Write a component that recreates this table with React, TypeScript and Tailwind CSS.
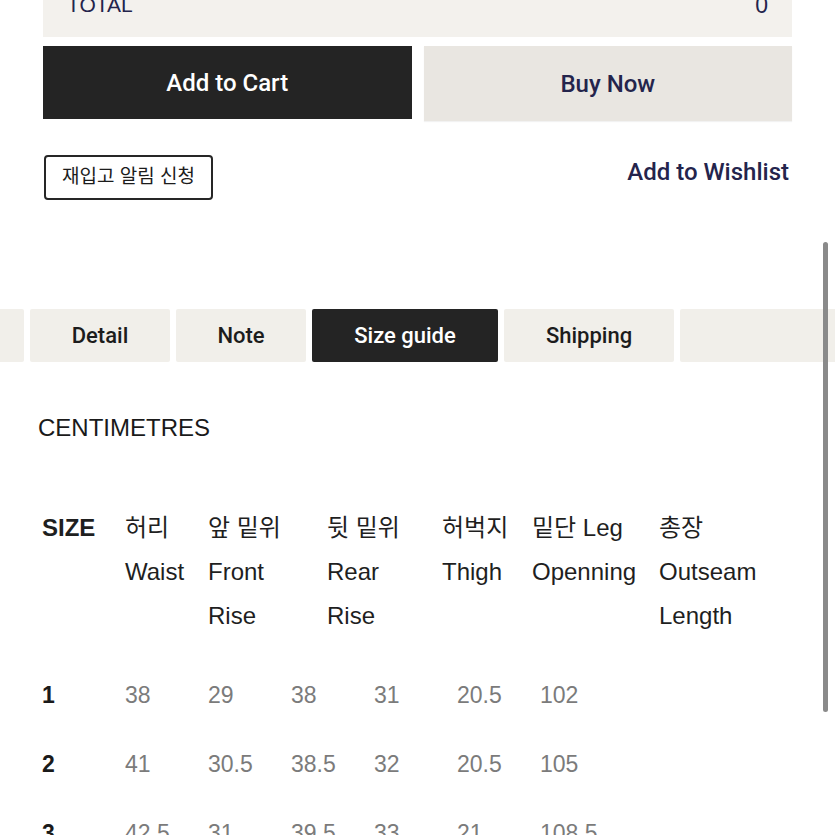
import React from "react";

const FONT = { fontFamily: '"Liberation Sans", "Noto Sans CJK KR", Arial, sans-serif' };
const MEDIUM = { fontFamily: 'Roboto, "Noto Sans CJK KR", Arial, sans-serif' };

const header: { cols: string[] }[] = [
  { cols: ["허리", "Waist"] },
  { cols: ["앞 밑위", "Front", "Rise"] },
  { cols: ["뒷 밑위", "Rear", "Rise"] },
  { cols: ["허벅지", "Thigh"] },
  { cols: ["밑단 Leg", "Openning"] },
  { cols: ["총장", "Outseam", "Length"] },
];

const rows = [
  ["1", "38", "29", "38", "31", "20.5", "102"],
  ["2", "41", "30.5", "38.5", "32", "20.5", "105"],
  ["3", "42.5", "31", "39.5", "33", "21", "108.5"],
];

const tabs: [string, string, boolean][] = [
  ["Detail", "w-[140px]", false],
  ["Note", "w-[130px]", false],
  ["Size guide", "w-[186px]", true],
  ["Shipping", "w-[170px]", false],
];

export default function App() {
  return (
    <div className="relative h-[835px] w-[835px] overflow-hidden bg-white" style={FONT}>
      {/* total panel, scrolled off the top */}
      <div className="mx-[43px] flex h-[37px] items-end justify-between overflow-hidden bg-[#f3f1ed] px-[24px] pb-[20px] text-[21px] leading-[24px] text-[#24244c]">
        <span>TOTAL</span>
        <span className="text-[23px]">0</span>
      </div>

      <div className="mx-[43px] mt-[9px] flex gap-[12px]" style={MEDIUM}>
        <button className="h-[73px] flex-1 bg-[#242424] text-[24px] font-medium text-white">
          Add to Cart
        </button>
        <button className="h-[75px] flex-1 bg-[#e9e6e1] text-[24px] font-medium text-[#24244c] shadow-[0_1px_1px_rgba(0,0,0,0.05)]">
          Buy Now
        </button>
      </div>

      <div className="mx-[43px] mt-[34px] flex items-start justify-between">
        <button className="ml-[1px] h-[45px] w-[169px] rounded-[4px] border-2 border-[#262626] text-[19px] text-[#1c1c1c]">
          재입고 알림 신청
        </button>
        <span className="mr-[3px] mt-[3px] text-[24px] font-medium leading-[28px] text-[#24244c]" style={MEDIUM}>
          Add to Wishlist
        </span>
      </div>

      {/* tabs */}
      <div className="mt-[109px] flex h-[53px] gap-[6px] overflow-hidden" style={MEDIUM}>
        <div className="w-[24px] shrink-0 rounded-r-[2px] bg-[#f1efea]" />
        {tabs.map(([label, w, active]) => (
          <div
            key={label}
            className={
              w +
              " flex shrink-0 items-center justify-center rounded-[2px] text-[22px] font-medium " +
              (active ? "bg-[#242424] text-white" : "bg-[#f1efea] text-[#1c1c1c]")
            }
          >
            {label}
          </div>
        ))}
        <div className="w-[160px] shrink-0 rounded-l-[2px] bg-[#f1efea]" />
      </div>

      <div className="ml-[38px] mt-[52px] text-[24px] leading-[28px] text-[#1a1a1a]">CENTIMETRES</div>

      {/* size table */}
      <div className="ml-[42px] mt-[64px] grid grid-cols-[83px_83px_119px_115px_90px_127px_1fr] text-[24px] leading-[44px] text-[#1f1f1f]">
        <div className="font-bold">SIZE</div>
        {header.map((h, i) => (
          <div key={i} className="flex flex-col">
            {h.cols.map((c) => (
              <span key={c} className="whitespace-nowrap">
                {c}
              </span>
            ))}
          </div>
        ))}
      </div>

      <div className="ml-[42px] mt-[23px] flex flex-col">
        {rows.map((r) => (
          <div key={r[0]} className="grid h-[69px] grid-cols-[repeat(7,83px)] items-center text-[23px]">
            {r.map((v, i) => (
              <span key={i} className={i === 0 ? "font-bold text-[#1a1a1a]" : "text-[#7b7b7b]"}>
                {v}
              </span>
            ))}
          </div>
        ))}
      </div>

      {/* scroll indicator */}
      <div className="absolute right-[7px] top-[242px] h-[470px] w-[5px] rounded-full bg-[#8a8a8a]" />
    </div>
  );
}
